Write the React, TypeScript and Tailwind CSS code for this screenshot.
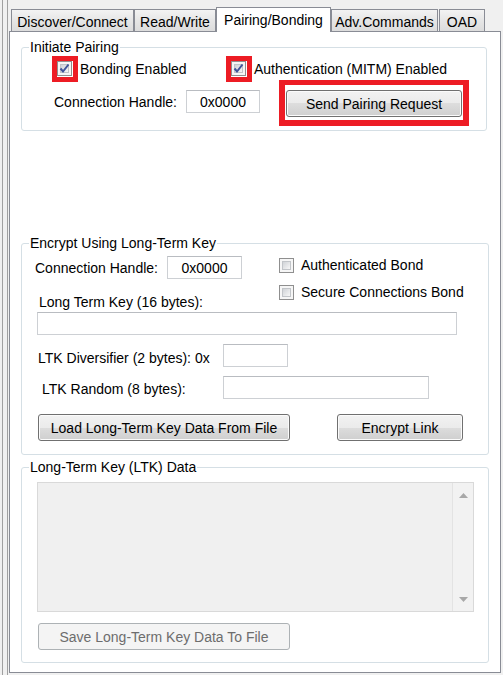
import type { ReactNode } from "react";

const btn =
  "flex items-center justify-center rounded-[3px] border border-[#707070] bg-[linear-gradient(#f2f2f2,#ebebeb_50%,#dddddd_50%,#cfcfcf)] shadow-[inset_0_0_0_1px_#fbfbfb] text-black";

const textBox = "flex items-center justify-center border border-[#cdd0d4] border-t-[#b9bcc1] bg-white";

const tabs = [
  { label: "Discover/Connect", w: "w-[123px] ml-[2px]" },
  { label: "Read/Write", w: "w-[82px]" },
  { label: "Pairing/Bonding", w: "w-[115px]", selected: true },
  { label: "Adv.Commands", w: "w-[107px]" },
  { label: "OAD", w: "w-[46px] ml-[1px]" },
];

function CheckBox({ checked = false }: { checked?: boolean }) {
  return (
    <div className="relative w-[15px] h-[15px] shrink-0 border border-[#8f8f8f] bg-[#f6f6f6] p-[2px]">
      <div className="w-full h-full border border-[#c2c5c9] bg-[linear-gradient(135deg,#d0d3d7,#f7f7f7)]" />
      {checked && (
        <svg className="absolute left-0 top-0" width="13" height="13" viewBox="0 0 13 13">
          <path d="M2.5 6.5 L5 9.5 L10.5 2.5" fill="none" stroke="#40549a" strokeWidth="2" />
        </svg>
      )}
    </div>
  );
}

function RedFrame({ children, className = "" }: { children: ReactNode; className?: string }) {
  return <div className={`border-[#ed1c24] bg-white ${className}`}>{children}</div>;
}

function Group({ title, className, children }: { title: string; className: string; children: ReactNode }) {
  return (
    <div className={`relative ml-[11px] rounded-[3px] border border-[#d5dfe5] ${className}`}>
      <span className="absolute left-[7px] top-[-9px] bg-white px-[1px] leading-[16px]">{title}</span>
      {children}
    </div>
  );
}

export default function App() {
  return (
    <div className="flex w-[503px] h-[675px] bg-[#f0f0f0] overflow-hidden font-['Liberation_Sans',Arial,sans-serif] text-[14px] leading-[16px] text-black">
      <div className="w-[9px] h-full shrink-0">
        <div className="ml-[2px] w-[6px] h-full border-x border-[#a0a0a0]" />
      </div>

      <div className="flex flex-col w-[492px] shrink-0">
        {/* tab strip */}
        <div className="flex items-end h-[31px]">
          {tabs.map((t) =>
            t.selected ? (
              <div
                key={t.label}
                className={`${t.w} relative z-10 -mb-px h-[25px] border border-b-0 border-[#898c95] bg-white pt-[4px] text-center`}
              >
                {t.label}
              </div>
            ) : (
              <div
                key={t.label}
                className={`${t.w} h-[22px] border border-b-0 border-[#898c95] bg-[linear-gradient(#f3f3f3,#e6e6e6_50%,#dcdcdc)] pt-[4px] text-center`}
              >
                {t.label}
              </div>
            )
          )}
        </div>

        {/* tab page */}
        <div className="h-[642px] border border-[#898c95] bg-white">
          <Group title="Initiate Pairing" className="mt-[15px] w-[466px] h-[84px]">
            <div className="flex items-center mt-[8px] ml-[30px]">
              <div className="flex items-center w-[174px]">
                <RedFrame className="border-[5px] pr-px pb-px">
                  <CheckBox checked />
                </RedFrame>
                <span className="ml-[2px]">Bonding Enabled</span>
              </div>
              <RedFrame className="border-[5px] pr-px pb-px">
                <CheckBox checked />
              </RedFrame>
              <span className="ml-[2px]">Authentication (MITM) Enabled</span>
            </div>
            <div className="flex items-start mt-[8px]">
              <div className="flex items-center ml-[32px]">
                <span className="w-[132px]">Connection Handle:</span>
                <div className={`${textBox} w-[74px] h-[23px]`}>0x0000</div>
              </div>
              <RedFrame className="ml-[19px] -mt-[10px] w-[190px] border-t-[5px] border-x-[6px] border-b-[6px] pl-px pt-[5px] pr-px pb-[3px]">
                <div className={`${btn} w-[176px] h-[27px]`}>Send Pairing Request</div>
              </RedFrame>
            </div>
          </Group>

          <Group title="Encrypt Using Long-Term Key" className="mt-[112px] w-[468px] h-[212px]">
            <div className="flex items-start">
              <div className="w-[257px]">
                <div className="flex items-center mt-[12px] ml-[13px]">
                  <span className="w-[132px]">Connection Handle:</span>
                  <div className={`${textBox} w-[75px] h-[23px]`}>0x0000</div>
                </div>
                <div className="mt-[15px] ml-[17px]">Long Term Key (16 bytes):</div>
              </div>
              <div>
                <div className="flex items-center mt-[13px]">
                  <CheckBox />
                  <span className="ml-[7px]">Authenticated Bond</span>
                </div>
                <div className="flex items-center mt-[11px]">
                  <CheckBox />
                  <span className="ml-[7px]">Secure Connections Bond</span>
                </div>
              </div>
            </div>
            <div className={`${textBox} mt-[2px] ml-[15px] w-[420px] h-[23px]`} />
            <div className="flex items-center mt-[9px]">
              <span className="ml-[16px] w-[185px] mt-[5px]">LTK Diversifier (2 bytes): 0x</span>
              <div className={`${textBox} w-[65px] h-[23px]`} />
            </div>
            <div className="flex items-center mt-[9px]">
              <span className="ml-[20px] w-[181px] mt-[3px]">LTK Random (8 bytes):</span>
              <div className={`${textBox} w-[206px] h-[23px]`} />
            </div>
            <div className="flex mt-[15px]">
              <div className={`${btn} ml-[16px] w-[252px] h-[27px]`}>Load Long-Term Key Data From File</div>
              <div className={`${btn} ml-[47px] w-[126px] h-[27px]`}>Encrypt Link</div>
            </div>
          </Group>

          <Group title="Long-Term Key (LTK) Data" className="mt-[12px] w-[468px] h-[196px]">
            <div className="flex mt-[14px] ml-[15px] w-[437px] h-[130px] border border-[#d9d9d9] bg-[#f0f0f0]">
              <div className="flex-1" />
              <div className="flex flex-col items-center justify-between w-[21px] border-l border-[#e3e3e3] bg-[#f2f2f2] pt-[10px] pb-[9px]">
                <svg width="9" height="5" viewBox="0 0 9 5">
                  <path d="M0 5 L4.5 0 L9 5 Z" fill="#a8a8a8" />
                </svg>
                <svg width="9" height="5" viewBox="0 0 9 5">
                  <path d="M0 0 L4.5 5 L9 0 Z" fill="#a8a8a8" />
                </svg>
              </div>
            </div>
            <div className="mt-[11px] ml-[16px] flex items-center justify-center w-[252px] h-[27px] rounded-[3px] border border-[#adb2b5] bg-[#f4f4f4] text-[#6d6d6d]">
              Save Long-Term Key Data To File
            </div>
          </Group>
        </div>
      </div>
    </div>
  );
}
